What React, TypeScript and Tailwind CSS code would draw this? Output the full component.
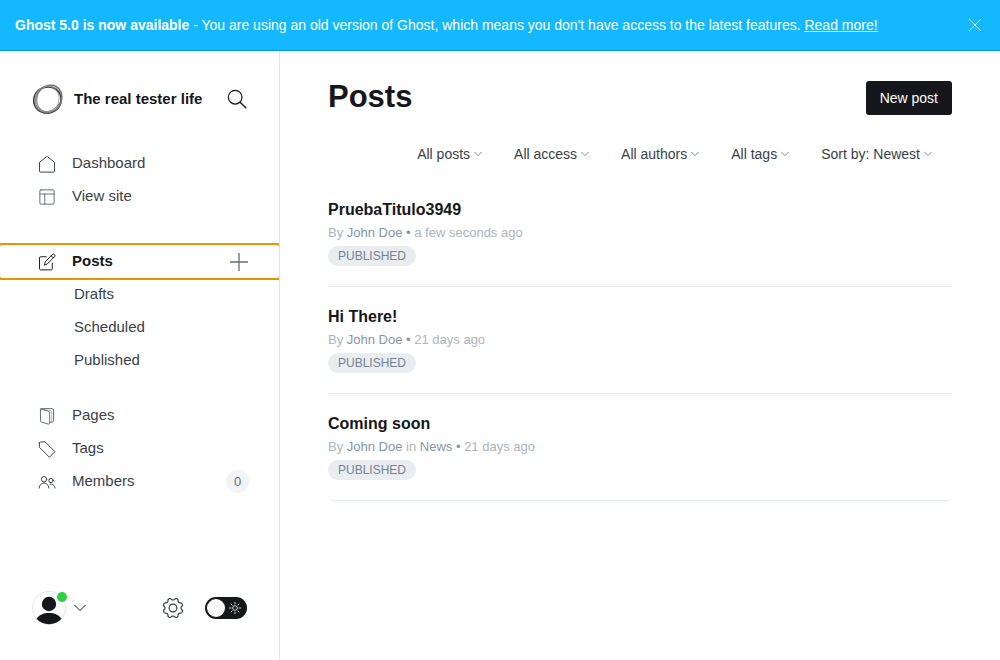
import { useState, type ReactNode } from "react";

type Filter = { label: string; options: string[] };
type Post = { title: string; author: string; tag?: string; when: string };

const filters: Filter[] = [
  { label: "Post type", options: ["All posts", "Draft posts", "Published posts"] },
  { label: "Access", options: ["All access", "Public", "Members-only"] },
  { label: "Author", options: ["All authors", "John Doe"] },
  { label: "Tag", options: ["All tags", "News"] },
  { label: "Sort order", options: ["Sort by: Newest", "Sort by: Oldest"] },
];

const posts: Post[] = [
  { title: "PruebaTitulo3949", author: "John Doe", when: "a few seconds ago" },
  { title: "Hi There!", author: "John Doe", when: "21 days ago" },
  { title: "Coming soon", author: "John Doe", tag: "News", when: "21 days ago" },
];

function Icon({ children, className }: { children: ReactNode; className: string }) {
  return (
    <svg
      viewBox="0 0 24 24"
      fill="none"
      stroke="currentColor"
      strokeWidth="1.3"
      strokeLinecap="round"
      strokeLinejoin="round"
      aria-hidden="true"
      className={className}
    >
      {children}
    </svg>
  );
}

const navIcon = "size-[18px] shrink-0";
const mutedNavIcon = "size-[18px] shrink-0 text-[#626d79]";

function HomeIcon() {
  return (
    <Icon className={navIcon}>
      <path d="M2 10.6v10.8c0 .8.6 1.400 1.400 1.400h17.200c.8 0 1.400-.6 1.400-1.400V10.600c0-.5-.2-1-.7-1.400L12.900 2.400a1.500 1.500 0 0 0-1.800 0L2.700 9.200c-.5.4-.7.9-.7 1.400z" />
    </Icon>
  );
}

function LayoutIcon() {
  return (
    <Icon className={mutedNavIcon}>
      <rect x="2.500" y="2.500" width="19" height="19" rx="1.500" />
      <path d="M2.500 8h19M9 8v13.500" />
    </Icon>
  );
}

function EditIcon() {
  return (
    <Icon className={navIcon}>
      <path d="M11 5H3.400C2.600 5 2 5.600 2 6.400v14.700c0 .8.6 1.400 1.400 1.400h14.200c.8 0 1.400-.6 1.400-1.400V13.500" />
      <path d="M8.700 15.700l1-4.200 9.500-9.400a2 2 0 0 1 2.800 0 2 2 0 0 1 0 2.800l-9.400 9.500z" />
      <path d="M17.600 3.700l2.800 2.800" />
    </Icon>
  );
}

function PagesIcon() {
  return (
    <Icon className={mutedNavIcon}>
      <path d="M3.300 3v15.500c0 .7.400 1.200 1 1.400l9.400 2.900c1 .3 1.800-.2 1.800-1.200V7.400c0-.8-.5-1.500-1.300-1.700z" />
      <path d="M3.300 3c.1-.5.5-.8 1.100-.8h14.500c1 0 1.800.8 1.800 1.800v14.500c0 1-.7 1.700-1.700 1.700h-3.300" />
      <path d="M5 2.600l11.500 2.200c1 .2 1.700 1 1.700 2v13.200" strokeOpacity=".45" />
    </Icon>
  );
}

function TagIcon() {
  return (
    <Icon className={navIcon}>
      <path d="M1.800 4v5.600l13.400 13.400 7.300-7.400L9.600 2.600H3.200c-.8 0-1.400.6-1.400 1.400z" />
    </Icon>
  );
}

function MembersIcon() {
  return (
    <Icon className={navIcon}>
      <circle cx="8" cy="8.300" r="3.600" />
      <path d="M1.500 20c.3-3.900 2.900-6.600 6.500-6.600s6.200 2.700 6.500 6.600" />
      <circle cx="17.300" cy="10" r="2.900" />
      <path d="M16 15c3.300-.8 6.200 1.300 6.600 5" />
    </Icon>
  );
}

function ChevronIcon({ className }: { className: string }) {
  return (
    <Icon className={className}>
      <path d="M1.500 6.500L12 17 22.500 6.500" strokeWidth="1" vectorEffect="non-scaling-stroke" />
    </Icon>
  );
}

const gearPath =
  Array.from({ length: 144 }, (_, i) => {
    const angle = (i / 144) * Math.PI * 2;
    const radius = 9.9 - 1.1 * Math.tanh(1.8 * Math.cos(8 * angle));
    const x = (12 + radius * Math.cos(angle)).toFixed(2);
    const y = (12 + radius * Math.sin(angle)).toFixed(2);
    return `${i === 0 ? "M" : "L"}${x} ${y}`;
  }).join("") + "z";

function GearIcon() {
  return (
    <Icon className="size-[22px]">
      <circle cx="12" cy="12" r="4.200" />
      <path d={gearPath} />
    </Icon>
  );
}

function NavLink({ icon, label, children }: { icon: ReactNode; label: string; children?: ReactNode }) {
  return (
    <li className="flex h-[33px] items-center pr-[30px]">
      <a href="#" className="flex flex-1 items-center gap-4 pl-[38px]">
        {icon}
        {label}
      </a>
      {children}
    </li>
  );
}

function Logo() {
  return (
    <svg viewBox="0 0 32 32" fill="none" className="size-8 shrink-0" aria-hidden="true">
      <ellipse cx="15.500" cy="17" rx="13.800" ry="13" stroke="#333" strokeWidth="1.700" transform="rotate(-20 15.500 17)" />
      <ellipse cx="17.300" cy="15.500" rx="12.200" ry="14" stroke="#777" strokeWidth="1.400" opacity=".75" transform="rotate(28 17.300 15.500)" />
      <ellipse cx="16.500" cy="15.500" rx="14.400" ry="11.800" stroke="#555" strokeWidth=".9" opacity=".8" transform="rotate(-46 16.500 15.500)" />
      <ellipse cx="16.300" cy="16.500" rx="12.400" ry="14.200" stroke="#888" strokeWidth="1.600" opacity=".6" transform="rotate(48 16.300 16.500)" />
      <ellipse cx="15" cy="16" rx="13" ry="12" stroke="#999" strokeWidth=".7" transform="rotate(-70 15 16)" />
    </svg>
  );
}

function Sidebar() {
  const [night, setNight] = useState(false);
  return (
    <aside className="flex w-[280px] shrink-0 flex-col overflow-hidden border-r border-[#e1e4e7] text-[15px] text-[#394047]">
      <header className="flex items-center gap-[10px] pt-8 pr-8 pl-8">
        <Logo />
        <span className="flex-1 font-bold text-[#15171a]">The real tester life</span>
        <button type="button" aria-label="Search" className="text-[#15171a]">
          <Icon className="size-5">
            <circle cx="9.800" cy="9.800" r="8.200" strokeWidth="1.500" />
            <path d="M15.800 15.800l6.700 6.700" strokeWidth="1.700" />
          </Icon>
        </button>
      </header>

      <nav aria-label="Main" className="mt-8 flex flex-col">
        <ul>
          <NavLink icon={<HomeIcon />} label="Dashboard" />
          <NavLink icon={<LayoutIcon />} label="View site" />
        </ul>
        <ul className="mt-8">
          <li className="flex h-[33px] items-center rounded-[2px] pr-[30px] outline-2 outline-[#e59700]">
            <a href="#" aria-current="page" className="flex flex-1 items-center gap-4 pl-[38px] font-bold text-[#15171a]">
              <EditIcon />
              Posts
            </a>
            <button type="button" aria-label="New post" className="text-[#626d79]">
              <svg viewBox="0 0 20 20" className="size-5" stroke="currentColor" strokeWidth="1.300" aria-hidden="true">
                <path d="M10 1v18M1 10h18" />
              </svg>
            </button>
          </li>
          {["Drafts", "Scheduled", "Published"].map((label) => (
            <li key={label} className="flex h-[33px] items-center">
              <a href="#" className="flex-1 pl-[74px]">
                {label}
              </a>
            </li>
          ))}
        </ul>
        <ul className="mt-[22px]">
          <NavLink icon={<PagesIcon />} label="Pages" />
          <NavLink icon={<TagIcon />} label="Tags" />
          <NavLink icon={<MembersIcon />} label="Members">
            <span className="flex size-[23px] items-center justify-center rounded-full bg-[#f1f3f4] text-[13px] text-[#626d79]">0</span>
          </NavLink>
        </ul>
      </nav>

      <footer className="mt-auto flex items-center px-8 pb-[35px]">
        <button type="button" aria-label="Account menu" className="flex items-center gap-2">
          <span className="relative">
            <svg viewBox="0 0 34 34" className="size-[34px]" aria-hidden="true">
              <circle cx="17" cy="17" r="16.500" fill="#fff" stroke="#e5e8ea" />
              <circle cx="17" cy="13" r="7.200" fill="#15171a" />
              <path d="M4.500 27.800C7 24 11.500 22 17 22s10 2 12.500 5.800C26.500 31.200 22 33.200 17 33.200S7.500 31.200 4.500 27.800z" fill="#15171a" />
            </svg>
            <span className="absolute top-px -right-px size-[10px] rounded-full bg-[#30cf43]" />
          </span>
          <ChevronIcon className="size-3 text-[#15171a]" />
        </button>
        <a href="#" aria-label="Settings" className="mr-[21px] ml-auto text-[#394047]">
          <GearIcon />
        </a>
        <label className="relative flex h-[22px] w-[42px] cursor-pointer items-center rounded-full bg-[#15171a] p-[2px]">
          <input
            type="checkbox"
            role="switch"
            aria-label="Night mode"
            checked={night}
            onChange={(event) => setNight(event.target.checked)}
            className="peer absolute inset-0 cursor-pointer appearance-none"
          />
          <span className="size-[18px] rounded-full bg-white peer-checked:order-2" />
          <svg viewBox="0 0 14 14" fill="none" stroke="#d5d8dc" strokeWidth="1" className="mx-auto size-[14px]" aria-hidden="true">
            <circle cx="7" cy="7" r="2.300" />
            <path d="M7 1v2.400M7 10.600V13M1 7h2.400M10.600 7H13M2.800 2.800l1.600 1.600M9.600 9.600l1.600 1.600M2.800 11.200l1.600-1.600M9.600 4.400l1.600-1.600" />
          </svg>
        </label>
      </footer>
    </aside>
  );
}

export default function App() {
  const [showBanner, setShowBanner] = useState(true);
  return (
    <div className="flex min-h-screen flex-col bg-white font-['Liberation_Sans',Arial,sans-serif]">
      {showBanner && (
        <div role="status" className="flex items-center justify-between border-b border-[#0099db] bg-[#14b8ff] py-[15px] pr-[18px] pl-[15px] text-sm text-white">
          <p>
            <strong>Ghost 5.0 is now available</strong> - You are using an old version of Ghost, which means you don't have access to the latest
            features.{" "}
            <a href="#" className="underline">
              Read more!
            </a>
          </p>
          <button type="button" aria-label="Dismiss" onClick={() => setShowBanner(false)}>
            <svg viewBox="0 0 14 14" className="size-[14px]" stroke="currentColor" strokeWidth=".8" aria-hidden="true">
              <path d="M1 1l12 12M13 1L1 13" />
            </svg>
          </button>
        </div>
      )}

      <div className="flex flex-1">
        <Sidebar />
        <main className="min-w-0 flex-1 px-12 pt-[30px]">
          <header className="flex items-start justify-between">
            <h1 className="text-[31px] leading-8 font-bold text-[#15171a]">Posts</h1>
            <a href="#" className="flex h-[34px] items-center rounded-[3px] bg-[#15171a] px-[14px] text-sm text-white">
              New post
            </a>
          </header>

          <div className="mt-[29px] flex flex-wrap justify-end gap-8 pr-5">
            {filters.map((filter) => (
              <label key={filter.label} className="flex items-center text-sm text-[#394047]">
                <select aria-label={filter.label} className="field-sizing-content cursor-pointer appearance-none pr-3">
                  {filter.options.map((option) => (
                    <option key={option}>{option}</option>
                  ))}
                </select>
                <ChevronIcon className="pointer-events-none -ml-2 size-2 text-[#7c8b9a]" />
              </label>
            ))}
          </div>

          <ol className="mt-4">
            {posts.map((post) => (
              <li key={post.title} className="border-b border-[#e6eaed] pt-[18px] pb-5 last:rounded-[5px]">
                <h2 className="font-bold text-[#15171a]">
                  <a href="#">{post.title}</a>
                </h2>
                <p className="text-[13px] leading-[22px] text-[#abb4be]">
                  By <span className="text-[#8496ad]">{post.author}</span>
                  {post.tag && (
                    <>
                      {" "}
                      in <span className="text-[#8496ad]">{post.tag}</span>
                    </>
                  )}{" "}
                  <span className="text-[#8496ad]">•</span> {post.when}
                </p>
                <span className="mt-[2px] flex h-5 w-fit items-center rounded-full bg-[#e9edf0] px-[10px] text-xs text-[#738394]">PUBLISHED</span>
              </li>
            ))}
          </ol>
        </main>
      </div>
    </div>
  );
}
